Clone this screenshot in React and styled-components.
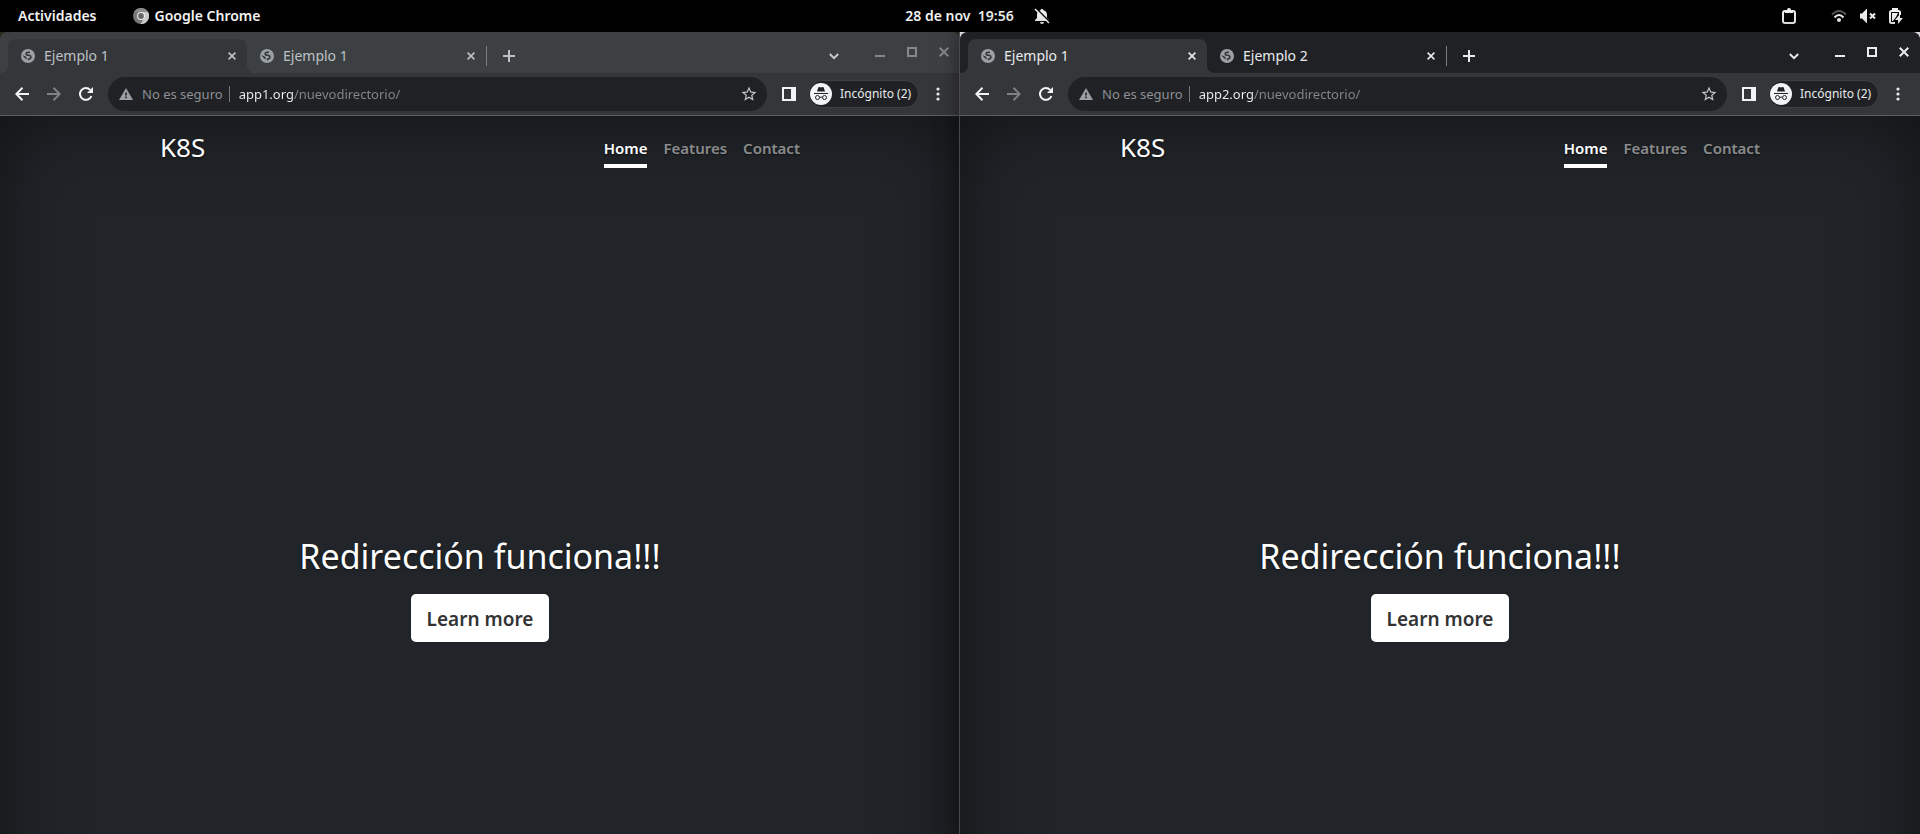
import React from "react";
import styled, { createGlobalStyle } from "styled-components";
import { MdStarBorder } from "react-icons/md";

const GlobalStyle = createGlobalStyle`
  *, *::before, *::after { box-sizing: border-box; }
  body { margin: 0; background: #000; font-family: "Noto Sans", "Open Sans", sans-serif; }
  button { font: inherit; color: inherit; background: none; border: 0; padding: 0; cursor: pointer; }
  a { color: inherit; text-decoration: none; }
  svg { display: block; flex: none; }
`;

const Desktop = styled.div`
  display: flex;
  flex-direction: column;
  height: 100vh;
  overflow: hidden;
`;

/* ---------- Shell bar ---------- */
const ShellBar = styled.header`
  display: grid;
  grid-template-columns: 1fr auto 1fr;
  align-items: center;
  height: 32px;
  flex: none;
  padding: 0 17px 0 18px;
  background: #000;
  color: #f2f2f2;
  font-size: 14px;
  font-weight: 600;
  line-height: 20px;
`;

const ShellGroup = styled.div`
  display: flex;
  align-items: center;
  gap: ${(p) => p.$gap}px;
  justify-content: ${(p) => p.$align || "flex-start"};
`;

const ShellButton = styled.button`
  display: flex;
  align-items: center;
  gap: 6px;
  height: 24px;
  white-space: pre;
`;

const DateButton = styled(ShellButton)`
  gap: 20px;
  margin-left: 34px;
`;

/* ---------- Windows ---------- */
const Workspace = styled.div`
  display: grid;
  grid-template-columns: 1fr 1fr;
  flex: 1;
  min-height: 0;
`;

const WindowSlot = styled.div`
  display: flex;
  min-width: 0;
  position: relative;
  background: ${(p) => (p.$active ? "#d6d6d2" : "#2c2a1e")};
  box-shadow: ${(p) => (p.$active ? "-1px 0 0 #4a4a4c, 0 0 20px rgba(0, 0, 0, 0.5)" : "none")};
`;

const Window = styled.section`
  display: flex;
  flex-direction: column;
  flex: 1;
  min-width: 0;
  border-radius: 8px 8px 0 0;
  overflow: hidden;
  background: #35363a;
  color: ${(p) => (p.$active ? "#e8eaed" : "#bdc1c6")};
`;

const TabStrip = styled.div`
  display: flex;
  align-items: stretch;
  height: 41px;
  flex: none;
  padding: 7px 8px 0;
  background: ${(p) => (p.$active ? "#202124" : "#3c4043")};
`;

const TabBox = styled.div`
  position: relative;
  display: flex;
  align-items: center;
  width: 239px;
  padding: 0 10px 0 13px;
  border-radius: 8px 8px 0 0;
  background: ${(p) => (p.$selected ? "#35363a" : "transparent")};

  &::before, &::after {
    content: "";
    display: ${(p) => (p.$selected ? "block" : "none")};
    position: absolute;
    bottom: 0;
    width: 8px;
    height: 8px;
  }
  &::before { left: -8px; background: radial-gradient(circle at 0 0, transparent 8px, #35363a 8px); }
  &::after { right: -8px; background: radial-gradient(circle at 100% 0, transparent 8px, #35363a 8px); }
`;

const TabLabel = styled.button`
  display: flex;
  align-items: center;
  flex: 1;
  gap: 9px;
  height: 34px;
  font-size: 14px;
  line-height: 20px;
  white-space: nowrap;
`;

const SmallButton = styled.button`
  display: flex;
  align-items: center;
  justify-content: center;
  width: 10px;
  height: 20px;
`;

const TabRule = styled.span`
  width: 1px;
  height: 20px;
  margin: 7px 14px 0 0;
  background: #7b7e82;
`;

const NewTab = styled(SmallButton)`
  width: 16px;
  height: 34px;
`;

const WindowControls = styled.div`
  display: flex;
  margin-left: auto;
  gap: 20px;
  padding-right: 2px;
  color: ${(p) => (p.$active ? "#e8eaed" : "#85878a")};
`;

const Control = styled(SmallButton)`
  width: 12px;
  height: 26px;
`;

const TabSearch = styled(Control)`
  height: 34px;
  margin-right: 14px;
  color: ${(p) => (p.$active ? "#e8eaed" : "#c8cacd")};
`;

const Toolbar = styled.div`
  display: flex;
  align-items: center;
  height: 43px;
  flex: none;
  padding: 0 12px;
  border-bottom: 1px solid #5d6064;
`;

const NavButton = styled.button`
  display: flex;
  align-items: center;
  justify-content: center;
  width: 20px;
  height: 28px;
  margin-right: 12px;
  color: ${(p) => (p.disabled ? "#7f8185" : "#f1f3f4")};
`;

const Omnibox = styled.form`
  display: flex;
  align-items: center;
  flex: 1;
  min-width: 0;
  height: 34px;
  padding: 0 9px 0 11px;
  border-radius: 17px;
  background: #202124;
  color: #9aa0a6;
`;

const Security = styled.button`
  display: flex;
  align-items: center;
  gap: 9px;
  padding-right: 6px;
  color: #8d9094;
  font-size: 13px;
  line-height: 20px;
  white-space: nowrap;

  svg { color: #9aa0a6; }
`;

const OmniRule = styled.span`
  width: 1px;
  height: 16px;
  margin-right: 9px;
  background: #74777b;
`;

const UrlInput = styled.input`
  flex: 1;
  min-width: 0;
  height: 20px;
  padding: 0;
  border: 0;
  outline: 0;
  font: 13px/20px "Noto Sans", "Open Sans", sans-serif;
  color: #e8eaed;
  background: linear-gradient(to right, #f1f3f4 54px, #85888c 54px);
  background-clip: text;
  -webkit-background-clip: text;
  -webkit-text-fill-color: transparent;
`;

const StarButton = styled(SmallButton)`
  width: 18px;
  color: #c4c7ca;
`;

const SidePanel = styled(SmallButton)`
  width: 14px;
  margin-left: 15px;
`;

const Incognito = styled.button`
  display: flex;
  align-items: center;
  gap: 8px;
  height: 28px;
  width: 111px;
  margin-left: 12px;
  padding-left: 1px;
  border: 1px solid #3f4145;
  border-radius: 14px;
  background: #202124;
  color: #e8eaed;
  font-size: 12px;
  line-height: 20px;
  white-space: nowrap;
`;

const MenuButton = styled(SmallButton)`
  width: 8px;
  margin: 0 6px 0 15px;
`;

/* ---------- Web page ---------- */
const Page = styled.div`
  position: relative;
  flex: 1;
  min-height: 0;
  overflow: hidden;
  background: #212529;
  color: #fff;
  text-align: center;
  text-shadow: 0 1px 2px rgba(0, 0, 0, 0.5);

  &::before {
    content: "";
    position: absolute;
    inset: 0 0 -160px;
    box-shadow: inset 0 0 80px rgba(0, 0, 0, 0.5);
    pointer-events: none;
  }
`;

const Cover = styled.div`
  position: relative;
  max-width: 672px;
  margin: 0 auto;
  padding: 16px;
`;

const Masthead = styled.header`
  display: flex;
  justify-content: space-between;
  align-items: flex-start;
`;

const Brand = styled.h3`
  margin: 0;
  font-size: 26px;
  font-weight: 400;
  line-height: 30px;
`;

const PageNav = styled.nav`
  display: flex;
  gap: 16px;
  font-size: 15px;
  font-weight: 600;
  line-height: 24px;
`;

const PageLink = styled.a`
  padding: 4px 0;
  color: ${(p) => (p.$current ? "#fff" : "rgba(255, 255, 255, 0.5)")};
  border-bottom: 4px solid ${(p) => (p.$current ? "#fff" : "transparent")};
`;

const Hero = styled.main`
  margin-top: 364px;
`;

const HeroTitle = styled.h1`
  margin: 0 0 14px;
  font-size: 34px;
  font-weight: 400;
  line-height: 48px;
`;

const HeroLink = styled.a`
  display: inline-block;
  height: 48px;
  padding: 8px 16px;
  border-radius: 5px;
  background: #fff;
  color: #333;
  font-size: 19px;
  font-weight: 600;
  line-height: 34px;
  text-shadow: none;
`;

/* ---------- Icons ---------- */
const Globe = () => (
  <svg width="14" height="14" viewBox="0 0 14 14">
    <circle cx="7" cy="7" r="7" fill="#9aa0a6" />
    <path
      d="M9 3.200Q5.200 3 5.200 4.800q0 1.500 2.300 1.500 2.400 0 2.400 1.700 0 1.900-3 2.600"
      fill="none" stroke="#35363a" strokeWidth="1.600"
    />
    <path d="M1.200 6.300l3.300 1q1.300.8 1.500 3l-1.500-.6z" fill="#35363a" />
  </svg>
);

const ArrowLeft = () => (
  <svg width="14" height="14" viewBox="0 0 14 14" fill="none" stroke="currentColor" strokeWidth="2">
    <path d="M14 7H1.500M7.500 0.800L1.300 7l6.200 6.200" />
  </svg>
);

const ArrowRight = () => (
  <svg width="14" height="14" viewBox="0 0 14 14" fill="none" stroke="currentColor" strokeWidth="2">
    <path d="M0 7h12.500M6.500 0.800L12.700 7l-6.200 6.200" />
  </svg>
);

const Reload = () => (
  <svg width="14" height="14" viewBox="0 0 14 14">
    <path d="M12.400 9A5.900 5.900 0 1 1 11.200 2.900" fill="none" stroke="currentColor" strokeWidth="2" />
    <path d="M14 0v6H8z" fill="currentColor" />
  </svg>
);

const Warning = () => (
  <svg width="14" height="12" viewBox="0 0 14 12">
    <path d="M7 0l7 12H0z" fill="currentColor" />
    <path d="M6.200 4.500h1.600v3H6.200zM6.200 8.600h1.600v1.600H6.200z" fill="#202124" />
  </svg>
);

const Cross = ({ size = 8, weight = 1.6 }) => (
  <svg width={size} height={size} viewBox="0 0 8 8" stroke="currentColor" strokeWidth={weight}>
    <path d="M0.600 0.600l6.800 6.800M7.400 0.600L0.600 7.400" />
  </svg>
);

const Plus = () => (
  <svg width="12" height="12" viewBox="0 0 12 12" fill="currentColor">
    <path d="M5 0h2v5h5v2H7v5H5V7H0V5h5z" />
  </svg>
);

const Chevron = () => (
  <svg width="10" height="7" viewBox="0 0 10 7" fill="none" stroke="currentColor" strokeWidth="2">
    <path d="M0.800 1L5 5.200 9.200 1" />
  </svg>
);

const Minimize = () => (
  <svg width="10" height="10" viewBox="0 0 10 10" fill="currentColor"><path d="M0 8h10v2H0z" /></svg>
);

const Maximize = () => (
  <svg width="10" height="10" viewBox="0 0 10 10" fill="none" stroke="currentColor" strokeWidth="2">
    <rect x="1" y="1" width="8" height="8" />
  </svg>
);

const PanelIcon = () => (
  <svg width="14" height="14" viewBox="0 0 14 14" fill="#f1f3f4" fillRule="evenodd">
    <path d="M0 0h14v14H0zM2 2v10h7V2z" />
  </svg>
);

const Dots = () => (
  <svg width="4" height="14" viewBox="0 0 4 14" fill="#e8eaed">
    <circle cx="2" cy="2" r="1.600" /><circle cx="2" cy="7" r="1.600" /><circle cx="2" cy="12" r="1.600" />
  </svg>
);

const IncognitoIcon = () => (
  <svg width="22" height="22" viewBox="0 0 22 22">
    <circle cx="11" cy="11" r="11" fill="#f1f3f4" />
    <path d="M7 8.500l1.300-4q.3-.8 1.100-.5l1.600.5 1.600-.5q.8-.3 1.100.5l1.300 4z" fill="#202124" />
    <path d="M4 10h14v1H4z" fill="#202124" />
    <g fill="none" stroke="#202124" strokeWidth="1">
      <circle cx="7.500" cy="14.500" r="2" /><circle cx="14.500" cy="14.500" r="2" />
      <path d="M9.500 14.500q1.500-1 3 0" />
    </g>
  </svg>
);

const ChromeIcon = () => (
  <svg width="16" height="16" viewBox="0 0 16 16">
    <circle cx="8" cy="8" r="8" fill="#777" />
    <path d="M8 4h7a8 8 0 0 1-7.500 12l3.900-6z" fill="#c9c9c9" />
    <path d="M1.200 4A8 8 0 0 1 15 4H8z" fill="#8c8c8c" />
    <circle cx="8" cy="8" r="4" fill="#eee" />
    <circle cx="8" cy="8" r="2.900" fill="#666" />
  </svg>
);

const BellOff = () => (
  <svg width="16" height="16" viewBox="0 0 16 16">
    <path d="M8 1a1.500 1.500 0 0 1 1.500 1.300C12 3 13 5 13 7v3l2 2v1H1v-1l2-2V7c0-2 1-4 3.500-4.700A1.500 1.500 0 0 1 8 1zM6 14h4a2 2 0 0 1-4 0z" fill="#f2f2f2" />
    <path d="M2.200 0.500l13.600 13.500" stroke="#000" strokeWidth="1.600" />
    <path d="M1 1l14 14" stroke="#f2f2f2" strokeWidth="1.500" />
  </svg>
);

const Clipboard = () => (
  <svg width="14" height="16" viewBox="0 0 14 16">
    <rect x="1" y="3" width="12" height="12" rx="2" fill="none" stroke="#f2f2f2" strokeWidth="2" />
    <path d="M3 2h2q0-2 2-2t2 2h2v3H3z" fill="#f2f2f2" />
  </svg>
);

const Wifi = () => (
  <svg width="16" height="14" viewBox="0 0 16 14" fill="none" strokeWidth="2">
    <path d="M1 5.500q7-7 14 0" stroke="#555" />
    <path d="M3.500 8.500q4.500-5 9 0" stroke="#f2f2f2" />
    <circle cx="8" cy="11" r="2" fill="#f2f2f2" />
  </svg>
);

const Muted = () => (
  <svg width="16" height="14" viewBox="0 0 16 14">
    <path d="M0 4.500h2L6.500 0H7v14h-.5L2 9.500H0z" fill="#f2f2f2" />
    <path d="M10 4.500l5 5M15 4.500l-5 5" stroke="#f2f2f2" strokeWidth="2" />
  </svg>
);

const Battery = () => (
  <svg width="14" height="16" viewBox="0 0 14 16">
    <path d="M6 15H2.500Q1 15 1 13.500v-9Q1 3 2.500 3h7Q11 3 11 4.500V7" fill="none" stroke="#f2f2f2" strokeWidth="2" />
    <path d="M3 0h6v3H3zM3 5h6L7 9l-3 4H3zM11 6v4h3l-5 6v-4H6z" fill="#f2f2f2" />
  </svg>
);

/* ---------- Composition ---------- */
function Tab({ title, selected }) {
  return (
    <TabBox $selected={selected}>
      <TabLabel role="tab" aria-selected={selected}>
        <Globe />
        {title}
      </TabLabel>
      <SmallButton aria-label="Cerrar pestaña"><Cross /></SmallButton>
    </TabBox>
  );
}

function Browser({ active, tabs, host }) {
  return (
    <WindowSlot $active={active}>
      <Window $active={active}>
        <TabStrip $active={active}>
          {tabs.map((title, i) => <Tab key={i} title={title} selected={i === 0} />)}
          <TabRule />
          <NewTab aria-label="Nueva pestaña"><Plus /></NewTab>
          <WindowControls $active={active}>
            <TabSearch $active={active} aria-label="Buscar pestañas"><Chevron /></TabSearch>
            <Control aria-label="Minimizar"><Minimize /></Control>
            <Control aria-label="Maximizar"><Maximize /></Control>
            <Control aria-label="Cerrar"><Cross size={10} /></Control>
          </WindowControls>
        </TabStrip>
        <Toolbar>
          <NavButton aria-label="Atrás"><ArrowLeft /></NavButton>
          <NavButton aria-label="Adelante" disabled><ArrowRight /></NavButton>
          <NavButton aria-label="Recargar"><Reload /></NavButton>
          <Omnibox onSubmit={(e) => e.preventDefault()}>
            <Security type="button"><Warning />No es seguro</Security>
            <OmniRule />
            <UrlInput aria-label="Dirección" defaultValue={`${host}/nuevodirectorio/`} />
            <StarButton type="button" aria-label="Añadir a marcadores"><MdStarBorder size={18} /></StarButton>
          </Omnibox>
          <SidePanel aria-label="Panel lateral"><PanelIcon /></SidePanel>
          <Incognito><IncognitoIcon />Incógnito (2)</Incognito>
          <MenuButton aria-label="Menú"><Dots /></MenuButton>
        </Toolbar>
        <Page>
          <Cover>
            <Masthead>
              <Brand>K8S</Brand>
              <PageNav>
                <PageLink href="#home" $current>Home</PageLink>
                <PageLink href="#features">Features</PageLink>
                <PageLink href="#contact">Contact</PageLink>
              </PageNav>
            </Masthead>
            <Hero>
              <HeroTitle>Redirección funciona!!!</HeroTitle>
              <HeroLink href="#more">Learn more</HeroLink>
            </Hero>
          </Cover>
        </Page>
      </Window>
    </WindowSlot>
  );
}

export default function App() {
  return (
    <>
      <GlobalStyle />
      <Desktop>
        <ShellBar>
          <ShellGroup $gap={36}>
            <ShellButton>Actividades</ShellButton>
            <ShellButton><ChromeIcon />Google Chrome</ShellButton>
          </ShellGroup>
          <DateButton>28 de nov  19:56<BellOff /></DateButton>
          <ShellGroup $gap={35} $align="flex-end">
            <ShellButton aria-label="Portapapeles"><Clipboard /></ShellButton>
            <ShellGroup as="button" $gap={13} aria-label="Sistema"><Wifi /><Muted /><Battery /></ShellGroup>
          </ShellGroup>
        </ShellBar>
        <Workspace>
          <Browser tabs={["Ejemplo 1", "Ejemplo 1"]} host="app1.org" />
          <Browser active tabs={["Ejemplo 1", "Ejemplo 2"]} host="app2.org" />
        </Workspace>
      </Desktop>
    </>
  );
}
